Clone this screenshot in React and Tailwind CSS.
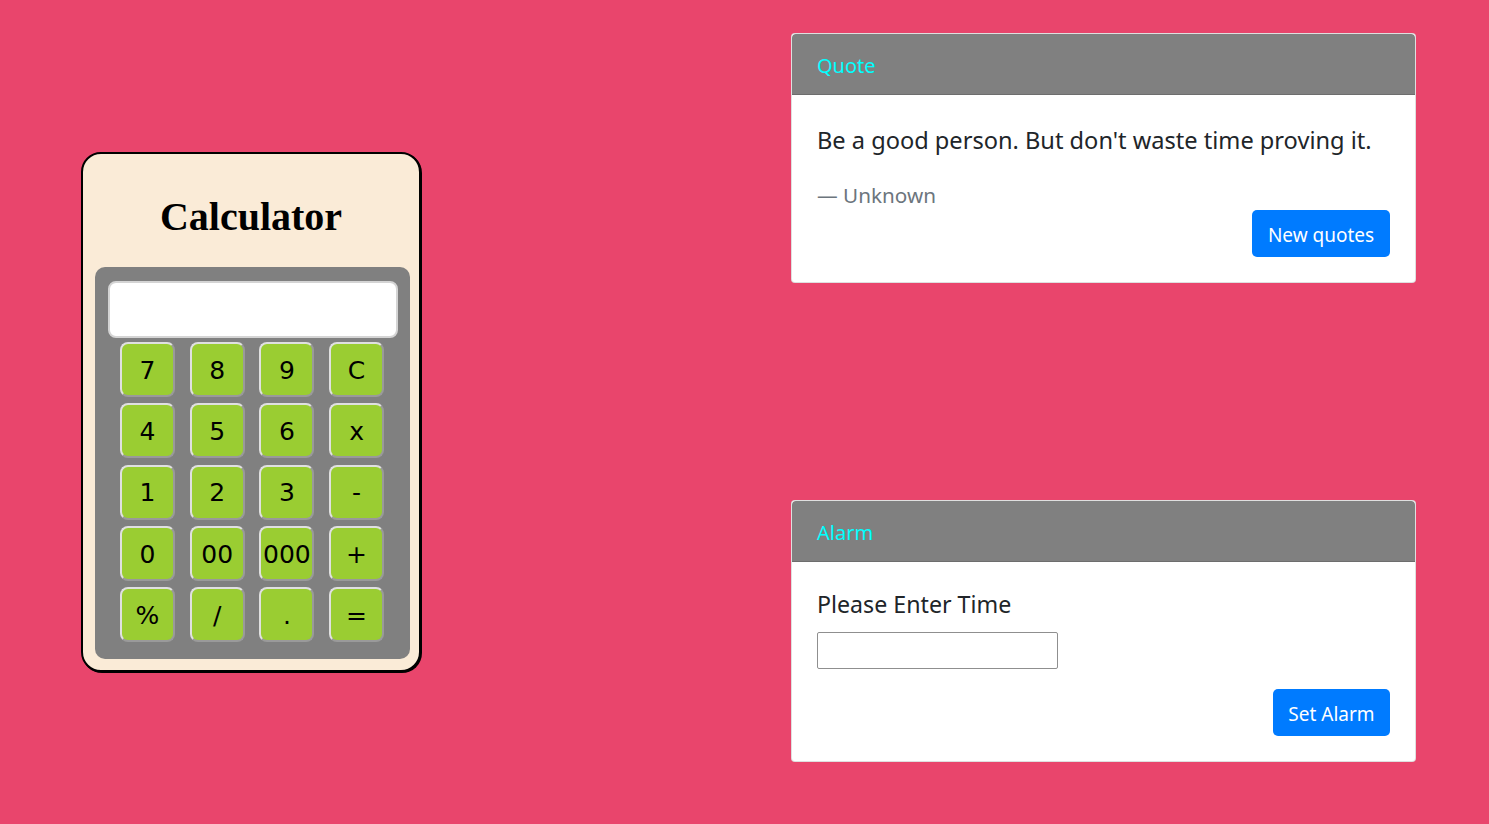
// calculator + quote + alarm page

const keys = [
  "7", "8", "9", "C",
  "4", "5", "6", "x",
  "1", "2", "3", "-",
  "0", "00", "000", "+",
  "%", "/", ".", "=",
];

function Calculator() {
  return (
    <div className="w-[340px] h-[520px] shrink-0 rounded-[20px] border-2 border-black bg-[#faebd7] shadow-[1px_1px_0_#000] flex flex-col items-center">
      <h1 className="mt-[43px] text-[40px] leading-[40px] font-bold text-black font-['Liberation_Serif',serif]">
        Calculator
      </h1>
      {/* keypad */}
      <div className="mt-[30px] ml-[3px] w-[315px] h-[392px] rounded-[10px] bg-[#808080] pt-[14px] px-[13px]">
        <div className="h-[57px] w-[290px] rounded-[8px] bg-white border-2 border-[#d4d4d4]" />
        <div className="mt-[4px] ml-[12px] grid grid-cols-[repeat(4,55px)] gap-x-[14.7px] gap-y-[6.3px]">
          {keys.map((k) => (
            <button
              key={k}
              className="h-[55px] w-[55px] rounded-[8px] bg-[#9acd32] border-2 border-t-[#e0e0e0] border-l-[#e0e0e0] border-r-[#9a9a9a] border-b-[#9a9a9a] text-[25px] text-black font-['DejaVu_Sans',sans-serif] flex items-center justify-center p-0 pt-[2px]"
            >
              {k}
            </button>
          ))}
        </div>
      </div>
    </div>
  );
}

function CardHeader({ title }) {
  return (
    <div className="h-[61px] bg-[#808080] border-b border-[rgba(0,0,0,0.15)] rounded-t-[4px] px-[25px] pt-[3px] flex items-center text-[20px] text-[#00ffff]">
      {title}
    </div>
  );
}

export default function App() {
  return (
    <div className="min-h-screen w-full bg-[#e9456c] flex font-['Noto_Sans',sans-serif]">
      <div className="pl-[81px] flex items-center">
        <Calculator />
      </div>

      <div className="ml-[370px] w-[625px] flex flex-col">
        {/* Quote */}
        <div className="mt-[33px] bg-white rounded-[4px] border border-[rgba(0,0,0,0.125)] overflow-hidden">
          <CardHeader title="Quote" />
          <div className="px-[25px] pt-[27px] pb-[25px]">
            <p className="text-[23.6px] leading-[36px] text-[#212529]">
              Be a good person. But don't waste time proving it.
            </p>
            <p className="mt-[22px] text-[20.7px] leading-[30px] text-[#6c757d]">
              — Unknown
            </p>
            <div className="flex justify-end">
              <button className="h-[47px] w-[138px] rounded-[5px] bg-[#007bff] text-white text-[19px] pt-[3px]">
                New quotes
              </button>
            </div>
          </div>
        </div>

        {/* Alarm */}
        <div className="mt-[217px] bg-white rounded-[4px] border border-[rgba(0,0,0,0.125)] overflow-hidden">
          <CardHeader title="Alarm" />
          <div className="px-[25px] pt-[24px] pb-[25px]">
            <p className="text-[23.2px] leading-[36px] text-[#212529]">
              Please Enter Time
            </p>
            <input
              type="text"
              className="mt-[10px] block w-[241px] h-[37px] border border-[#8f8f8f] rounded-[2px] bg-white"
            />
            <div className="mt-[20px] flex justify-end">
              <button className="h-[47px] w-[117px] rounded-[5px] bg-[#007bff] text-white text-[19px] pt-[3px]">
                Set Alarm
              </button>
            </div>
          </div>
        </div>
      </div>
    </div>
  );
}
